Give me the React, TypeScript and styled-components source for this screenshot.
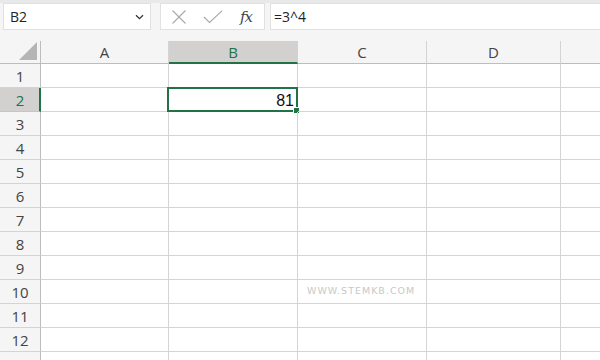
import React from "react";
import styled, { createGlobalStyle } from "styled-components";

const GlobalStyle = createGlobalStyle`
  html, body { margin: 0; padding: 0; background: #ffffff; }
  body { width: 600px; height: 360px; overflow: hidden; font-family: "Segoe UI", "Open Sans", "Noto Sans", sans-serif; }
`;

const GREEN = "#217346";
const LINE = "#d4d4d4";
const HEAD_BG = "#f5f5f5";
const SEL_BG = "#d3d1cf";

const COLS = [128, 129, 129, 134, 60];
const COL_NAMES = ["A", "B", "C", "D", ""];
const ROWS = 13;

const Page = styled.div`
  width: 600px;
  height: 360px;
  overflow: hidden;
  display: flex;
  flex-direction: column;
`;

const Toolbar = styled.div`
  flex: none;
  display: flex;
  align-items: flex-start;
  height: 41px;
  box-sizing: border-box;
  border-top: 3px solid #e9e9e9;
  background: ${HEAD_BG};
  padding-left: 3px;
  gap: 9px;
`;

const Box = styled.div<{ $w?: number; $grow?: boolean }>`
  height: 27px;
  box-sizing: border-box;
  background: #fff;
  border: 1px solid #e1e1e1;
  display: flex;
  align-items: center;
  ${(p) => (p.$w ? `width: ${p.$w}px; flex: none;` : "")}
  ${(p) => (p.$grow ? "flex: 1;" : "")}
`;

const NameBox = styled(Box)`
  justify-content: space-between;
  padding: 0 6px 0 6px;
  font-size: 14px;
  color: #222;
`;

const FuncBox = styled(Box)`
  justify-content: space-between;
  padding: 0 10px 0 10px;
`;

const FormulaBox = styled(Box)`
  margin-left: -4px;
  border-right: none;
  padding-left: 3px;
  font-size: 14px;
  color: #222;
`;

const Fx = styled.span`
  font-family: "DejaVu Serif", "Liberation Serif", serif;
  font-style: italic;
  font-size: 15px;
  color: #444;
  letter-spacing: -1px;
  padding-right: 2px;
`;

const Grid = styled.div`
  flex: none;
  display: grid;
  grid-template-columns: 41px ${COLS.map((c) => c + "px").join(" ")};
  grid-auto-rows: 24px;
  grid-template-rows: 23px;
`;

const Corner = styled.div`
  background: ${HEAD_BG};
  border-right: 1px solid #bdbdbd;
  border-bottom: 1px solid #bdbdbd;
  box-sizing: border-box;
  display: flex;
  align-items: flex-end;
  justify-content: flex-end;
  padding: 0 3px 3px 0;
`;

const ColHead = styled.div<{ $sel?: boolean }>`
  box-sizing: border-box;
  background: ${(p) => (p.$sel ? SEL_BG : HEAD_BG)};
  border-right: 1px solid ${(p) => (p.$sel ? SEL_BG : LINE)};
  border-bottom: ${(p) => (p.$sel ? `2px solid ${GREEN}` : "1px solid #bdbdbd")};
  display: flex;
  align-items: center;
  justify-content: center;
  font-size: 15px;
  color: ${(p) => (p.$sel ? GREEN : "#444")};
  padding-top: ${(p) => (p.$sel ? "1px" : "0")};
`;

const RowHead = styled.div<{ $sel?: boolean }>`
  box-sizing: border-box;
  background: ${(p) => (p.$sel ? SEL_BG : HEAD_BG)};
  border-right: ${(p) => (p.$sel ? `2px solid ${GREEN}` : "1px solid #bdbdbd")};
  border-bottom: 1px solid ${(p) => (p.$sel ? "#c6c6c6" : LINE)};
  display: flex;
  align-items: center;
  justify-content: center;
  font-size: 15px;
  color: ${(p) => (p.$sel ? GREEN : "#444")};
  padding-left: ${(p) => (p.$sel ? "1px" : "0")};
`;

const Cell = styled.div`
  box-sizing: border-box;
  border-right: 1px solid ${LINE};
  border-bottom: 1px solid ${LINE};
  position: relative;
  display: flex;
  align-items: center;
  justify-content: flex-end;
  padding-right: 3px;
  font-family: "Liberation Sans", "Open Sans", sans-serif;
  font-size: 16px;
  color: #111;
`;

const Selection = styled.div`
  position: absolute;
  left: -2px;
  top: -1px;
  right: -1px;
  bottom: -1px;
  border: 2px solid ${GREEN};
  pointer-events: none;
`;

const Handle = styled.div`
  position: absolute;
  right: -4px;
  bottom: -4px;
  width: 5px;
  height: 5px;
  background: ${GREEN};
  border: 1px solid #fff;
`;

const Watermark = styled.div`
  position: absolute;
  left: 9px;
  top: 5px;
  font-family: "DejaVu Sans", "Liberation Sans", sans-serif;
  font-size: 9.5px;
  letter-spacing: 1px;
  color: #c8c8c8;
  white-space: nowrap;
`;

const CellText = styled.span`
  position: relative;
  top: 1px;
`;

const Chevron = () => (
  <svg width="9" height="6" viewBox="0 0 9 6">
    <path d="M1 1.2 L4.5 4.6 L8 1.2" fill="none" stroke="#333" strokeWidth="1.3" />
  </svg>
);

const Cross = () => (
  <svg width="16" height="16" viewBox="0 0 16 16">
    <path d="M1.5 1.5 L14.5 14.5 M14.5 1.5 L1.5 14.5" stroke="#a8a8a8" strokeWidth="1.1" fill="none" />
  </svg>
);

const Check = () => (
  <svg width="20" height="14" viewBox="0 0 20 14">
    <path d="M1 7 L6.5 12.5 L19 0.8" stroke="#a8a8a8" strokeWidth="1.1" fill="none" />
  </svg>
);

const Triangle = () => (
  <svg width="18" height="18" viewBox="0 0 18 18">
    <path d="M18 0 L18 18 L0 18 Z" fill="#b5b5b5" />
  </svg>
);

export default function App() {
  const rows = [];
  for (let r = 1; r <= ROWS; r++) {
    rows.push(
      <RowHead key={`h${r}`} $sel={r === 2}>
        {r}
      </RowHead>
    );
    COLS.forEach((_, c) => {
      const isB2 = r === 2 && c === 1;
      const isMark = r === 10 && c === 2;
      rows.push(
        <Cell key={`c${r}-${c}`}>
          {isB2 && (
            <>
              <CellText>81</CellText>
              <Selection>
                <Handle />
              </Selection>
            </>
          )}
          {isMark && <Watermark>WWW.STEMKB.COM</Watermark>}
        </Cell>
      );
    });
  }

  return (
    <Page>
      <GlobalStyle />
      <Toolbar>
        <NameBox $w={148}>
          <span>B2</span>
          <Chevron />
        </NameBox>
        <FuncBox $w={105}>
          <Cross />
          <Check />
          <Fx>fx</Fx>
        </FuncBox>
        <FormulaBox $grow>=3^4</FormulaBox>
      </Toolbar>
      <Grid>
        <Corner>
          <Triangle />
        </Corner>
        {COL_NAMES.map((n, i) => (
          <ColHead key={i} $sel={i === 1}>
            {n}
          </ColHead>
        ))}
        {rows}
      </Grid>
    </Page>
  );
}
